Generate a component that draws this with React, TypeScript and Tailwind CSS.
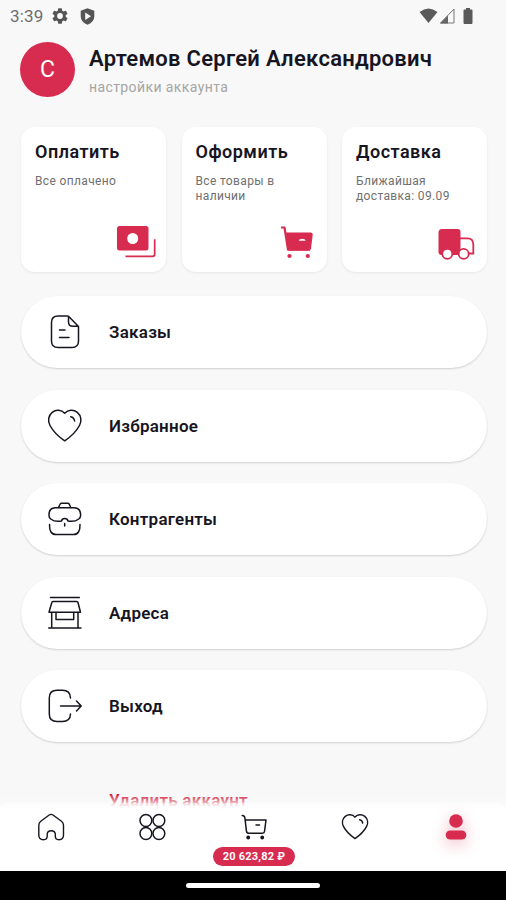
import * as React from "react";

const ACCENT = "#d72b50";

type IconProps = { children: React.ReactNode; className?: string; size?: number; width?: number };

// line icon base
const LineIcon = ({ children, className = "", size = 36, width = 1.5 }: IconProps) => (
  <svg
    width={size}
    height={size}
    viewBox={`0 0 ${size} ${size}`}
    fill="none"
    stroke="#17151f"
    strokeWidth={width}
    strokeLinecap="round"
    strokeLinejoin="round"
    className={`shrink-0 ${className}`}
  >
    {children}
  </svg>
);

const FileIcon = () => (
  <LineIcon>
    <path d="M20.500 2H11Q4.500 2 4.500 8.500V27Q4.500 33.500 11 33.500H25Q31.500 33.500 31.500 27V12.500L21.500 2.300V8Q21.500 12.300 26 12.300H31" />
    <path d="M12.500 16H18M12.500 23.500H22" />
  </LineIcon>
);

const HeartIcon = () => (
  <LineIcon>
    <path d="M17.700 5.300C14.500 1.700 9 1.300 5.200 4.300C1.300 7.500.600 13 3 17.500C5.900 23 12 29 17.700 32.800C23.500 29 29.500 23 32.500 17.500C34.900 13 34.200 7.500 30.300 4.300C26.500 1.300 21 1.700 17.700 5.300Z" />
    <path d="M23.700 8.700Q27 9.300 27.600 13" />
  </LineIcon>
);

const BriefcaseIcon = () => (
  <LineIcon>
    <path d="M11.500 6.500L13.200 3Q13.600 2.300 14.500 2.300H20.800Q21.700 2.300 22.200 3L23.800 6.500" />
    <path d="M14.500 20Q8 21.300 3.700 18Q1.700 16.500 2 13.500Q2.200 6.700 8.500 6.700H27Q33.300 6.700 33.600 13.500Q33.900 16.500 31.800 18Q27.500 21.300 21 20Q20.500 17.500 17.700 17.500Q15 17.500 14.500 20Z" />
    <path d="M2.500 23.500Q2.200 33.500 9 33.500H26.500Q33.300 33.500 33 23.500M17.700 22.500V25" />
  </LineIcon>
);

const ShopIcon = () => (
  <LineIcon>
    <path d="M3.500 2.500H32.300M6 6.500H29.700Q30.700 6.500 31 7.500L33.500 17.300H2L4.800 7.500Q5 6.500 6 6.500Z" />
    <path d="M4.700 17.500V32.500M31 17.500V32.500M9 17.500V24.500H26.700V17.500M1.700 33H34" />
  </LineIcon>
);

const ExitIcon = () => (
  <LineIcon>
    <path d="M23.500 10Q23.200 2.300 15.500 2.300H10Q2.300 2.300 2.300 10V26Q2.300 33.500 10 33.500H15.500Q23.200 33.500 23.500 26" />
    <path d="M13.500 18H34M29.500 13L34.200 18L29.500 23" />
  </LineIcon>
);

const cards = [
  {
    title: "Оплатить",
    text: "Все оплачено",
    icon: (
      <svg width="40" height="32" viewBox="0 0 40 32" fill="none">
        <rect x="1" y="0" width="31.500" height="24.500" rx="2.500" fill={ACCENT} />
        <circle cx="16.700" cy="12.500" r="5.500" fill="white" />
        <path d="M9.500 30.300H36.700Q38.700 30.300 38.700 28.300V13.300" stroke={ACCENT} strokeWidth="1.700" />
      </svg>
    ),
    pos: "right-[10px] bottom-[14px]",
  },
  {
    title: "Оформить",
    text: "Все товары в наличии",
    icon: (
      <svg width="34" height="34" viewBox="0 0 34 34" fill="none">
        <path d="M1 1.500H4.500L8 23.700H30" stroke={ACCENT} strokeWidth="2.200" strokeLinejoin="round" />
        <path d="M5.500 6.500H30.500Q33 6.500 32.700 9L31 22.500Q30.700 24.500 28.700 24.500H9Q8 24.500 7.700 23Z" fill={ACCENT} />
        <path d="M18.700 14.800Q19.200 12.800 22.200 12.800Q25.200 12.800 25.700 14.800Z" fill="white" />
        <circle cx="9.500" cy="30" r="2.100" fill={ACCENT} />
        <circle cx="27.800" cy="30" r="2.100" fill={ACCENT} />
      </svg>
    ),
    pos: "right-[13px] bottom-[12px]",
  },
  {
    title: "Доставка",
    text: "Ближайшая доставка: 09.09",
    icon: (
      <svg width="38" height="32" viewBox="0 0 38 32" fill="none">
        <path d="M4 0H19.500Q22.500 0 22.500 3V26H3.500Q.500 26 .500 23V3.500Q.500 0 4 0Z" fill={ACCENT} />
        <path d="M22 9.300H29.500Q35.300 9.300 35.300 15.500V24.500H31M20 25.500H22" stroke={ACCENT} strokeWidth="1.800" />
        <circle cx="9.300" cy="24.800" r="5" fill="white" stroke={ACCENT} strokeWidth="1.800" />
        <circle cx="25.700" cy="24.800" r="5" fill="white" stroke={ACCENT} strokeWidth="1.800" />
      </svg>
    ),
    pos: "right-[11px] bottom-[11px]",
  },
];

const menu = [
  { label: "Заказы", icon: <FileIcon /> },
  { label: "Избранное", icon: <HeartIcon /> },
  { label: "Контрагенты", icon: <BriefcaseIcon /> },
  { label: "Адреса", icon: <ShopIcon /> },
  { label: "Выход", icon: <ExitIcon /> },
];

const StatusBar = () => (
  <div className="flex h-8 items-center justify-between pr-[33px] pl-[10px] text-[#6e6e6e]">
    <div className="flex items-center">
      <span className="w-[42px] text-[17px] leading-8 tracking-[0.2px]">3:39</span>
      <svg width="16" height="16" viewBox="2 2 20 20" fill="#555">
        <path
          fillRule="evenodd"
          d="M19.140 12.940c.040-.300.060-.610.060-.940s-.020-.640-.070-.940l2.030-1.580a.49.49 0 0 0 .12-.61l-1.920-3.320a.49.49 0 0 0-.59-.22l-2.390.96a7 7 0 0 0-1.620-.94l-.36-2.540A.48.48 0 0 0 13.920 2.400h-3.840a.48.48 0 0 0-.47.41l-.36 2.540c-.59.24-1.130.57-1.620.94l-2.390-.96a.48.48 0 0 0-.59.22L2.740 8.870a.48.48 0 0 0 .12.61l2.030 1.580a6 6 0 0 0 0 1.880l-2.030 1.580a.49.49 0 0 0-.12.61l1.920 3.320c.12.22.37.29.59.22l2.390-.96c.5.38 1.030.7 1.620.94l.36 2.540c.05.24.24.41.48.41h3.840c.24 0 .44-.17.47-.41l.36-2.540a7 7 0 0 0 1.620-.94l2.390.96c.22.08.47 0 .59-.22l1.920-3.320a.48.48 0 0 0-.12-.61zM12 15.600a3.600 3.600 0 1 1 0-7.200 3.600 3.600 0 0 1 0 7.200z"
        />
      </svg>
      <svg width="15" height="17" viewBox="0 0 15 17" className="ml-[12px]">
        <path d="M7.500.300L14.300 2.800V8.500Q14.300 14 7.500 16.700Q.700 14 .700 8.500V2.800Z" fill="#555" />
        <path d="M5.200 4.500L11 8.300L5.200 12Z" fill="#f8f8f8" />
      </svg>
    </div>
    <div className="flex items-center">
      <svg width="19" height="16" viewBox="0 0 19 16" fill="#5a5a5a">
        <path d="M.500 4Q9.500-3 18.500 4L9.500 15Z" />
      </svg>
      <svg width="16" height="16" viewBox="0 0 16 16" className="ml-px">
        <path d="M1.500 15L15 1V15Z" fill="none" stroke="#777" strokeWidth="1" />
        <path d="M1 15.500L9 7.500V15.500Z" fill="#666" />
      </svg>
      <svg width="10" height="16" viewBox="0 0 10 16" fill="#5a5a5a" className="ml-[8px]">
        <path d="M3 0H7V1.500H8.500Q9.500 1.500 9.500 2.500V15Q9.500 16 8.500 16H1.500Q.500 16 .500 15V2.500Q.500 1.500 1.500 1.500H3Z" />
      </svg>
    </div>
  </div>
);

const BottomNav = () => (
  <nav className="grid h-[68px] grid-cols-5 rounded-t-lg bg-gradient-to-b from-white/50 from-0% to-white to-10% pt-[10px]">
    <div className="flex justify-center">
      <LineIcon size={28} width={1.4}>
        <path d="M12.200 2Q14.100.700 16 2L24.500 8.300Q26.500 9.800 26.500 12.200V22Q26.500 26.700 22 26.700Q18.500 26.700 18.300 23.500V21Q18 17.800 14.200 17.800Q10.500 17.800 10.200 21V23.500Q10 26.700 6.300 26.700Q1.800 26.700 1.800 22V12.200Q1.800 9.800 3.800 8.300Z" />
      </LineIcon>
    </div>
    <div className="flex justify-center pl-px">
      <LineIcon size={28} width={1.5}>
        <circle cx="7.900" cy="7.500" r="5.900" />
        <circle cx="20.900" cy="7.500" r="5.900" />
        <circle cx="7.900" cy="20.500" r="5.900" />
        <circle cx="20.900" cy="20.500" r="5.900" />
      </LineIcon>
    </div>
    <div className="flex flex-col items-center pl-[2px]">
      <LineIcon size={28} width={1.5}>
        <path d="M2.200 2.500Q4.600 2.500 4.900 4.800L6.400 17.800Q6.700 20.300 9 20.300H22.500Q24.300 20.300 24.500 18.500L26 7H5.200M16 12H19.500" />
        <circle cx="8.200" cy="24.500" r="1.200" fill="#17151f" />
        <circle cx="22.200" cy="24.500" r="1.200" fill="#17151f" />
      </LineIcon>
      <span className="mt-[6px] flex h-[19px] w-[82px] items-center justify-center rounded-full bg-[#d72b50] pt-px text-[11px] font-bold tracking-[0.2px] whitespace-nowrap text-white">
        20 623,82 ₽
      </span>
    </div>
    <div className="flex justify-center pl-[2px]">
      <svg
        width="28"
        height="28"
        viewBox="0 0 36 36"
        fill="none"
        stroke="#17151f"
        strokeWidth="1.900"
        strokeLinecap="round"
        strokeLinejoin="round"
      >
        <path d="M18 5.300C14.800 1.700 9.300 1.300 5.500 4.300C1.600 7.500.900 13 3.300 17.500C6.200 23 12.300 29 18 32.800C23.800 29 29.800 23 32.800 17.500C35.200 13 34.500 7.500 30.600 4.300C26.800 1.300 21.300 1.700 18 5.300Z" />
        <path d="M24 8.700Q27.300 9.300 27.900 13" />
      </svg>
    </div>
    <div className="flex justify-center">
      <svg
        width="28"
        height="28"
        viewBox="0 0 28 28"
        fill={ACCENT}
        className="overflow-visible drop-shadow-[0_4px_8px_rgba(215,43,80,0.4)]"
      >
        <circle cx="15" cy="8" r="6.800" />
        <rect x="4.700" y="17.500" width="20.600" height="9" rx="4.500" />
      </svg>
    </div>
  </nav>
);

export default function App() {
  return (
    <div className="relative h-[900px] w-[506px] overflow-hidden bg-[#f8f8f8] font-['Roboto','Liberation_Sans',sans-serif] text-[#17151f]">
      <StatusBar />

      {/* header */}
      <header className="mt-[10px] flex h-[55px] pl-[20px]">
        <div className="flex size-[55px] items-center justify-center rounded-full bg-[#d72b50] pt-[2px] text-[23px] text-white">
          С
        </div>
        <div className="ml-[14px] whitespace-nowrap">
          <h1 className="mt-[3px] text-[22px] leading-7 font-semibold tracking-[0.28px]">
            Артемов Сергей Александрович
          </h1>
          <p className="mt-[5px] text-[14px] leading-[18px] tracking-[0.4px] text-[#a5a5a5]">
            настройки аккаунта
          </p>
        </div>
      </header>

      {/* cards */}
      <section className="mt-[30px] grid grid-cols-3 gap-[15.5px] pr-[19px] pl-[21px]">
        {cards.map((card) => (
          <div
            key={card.title}
            className="relative h-[145px] rounded-[14px] bg-white px-[14px] pt-[13px] shadow-[0_1px_3px_rgba(0,0,0,0.07)]"
          >
            <h2 className="text-[18px] leading-6 font-semibold tracking-[0.5px]">{card.title}</h2>
            <p className="mt-[10px] w-[108px] text-[12px] leading-[15px] tracking-[0.35px] text-[#707070]">
              {card.text}
            </p>
            <div className={`absolute ${card.pos}`}>{card.icon}</div>
          </div>
        ))}
      </section>

      {/* menu */}
      <section className="mt-[24px] flex flex-col gap-[21.5px] pr-[19px] pl-[21px]">
        {menu.map((item) => (
          <div
            key={item.label}
            className="flex h-[72px] items-center rounded-full bg-white pl-[26px] shadow-[0_1px_2px_rgba(0,0,0,0.16)]"
          >
            {item.icon}
            <span className="ml-[26px] pt-[2px] text-[17px] font-semibold tracking-[0.25px]">{item.label}</span>
          </div>
        ))}
        <div className="flex h-[72px] items-center rounded-full pt-[2px] pl-[88px] text-[17px] font-semibold tracking-[0.25px] text-[#d0112f]">
          Удалить аккаунт
        </div>
      </section>

      <div className="absolute inset-x-0 bottom-0">
        {/* fade of the list under the tab bar */}
        <div className="h-[9px] bg-gradient-to-b from-[#f8f8f8]/0 to-[#fafafa]/70" />
        <div className="bg-gradient-to-b from-[#fafafa]/60 to-white to-15%">
          <BottomNav />
        </div>
        <div className="flex h-[29px] justify-center bg-black pt-[12px]">
          <div className="h-[5px] w-[134px] rounded-full bg-white" />
        </div>
      </div>
    </div>
  );
}
